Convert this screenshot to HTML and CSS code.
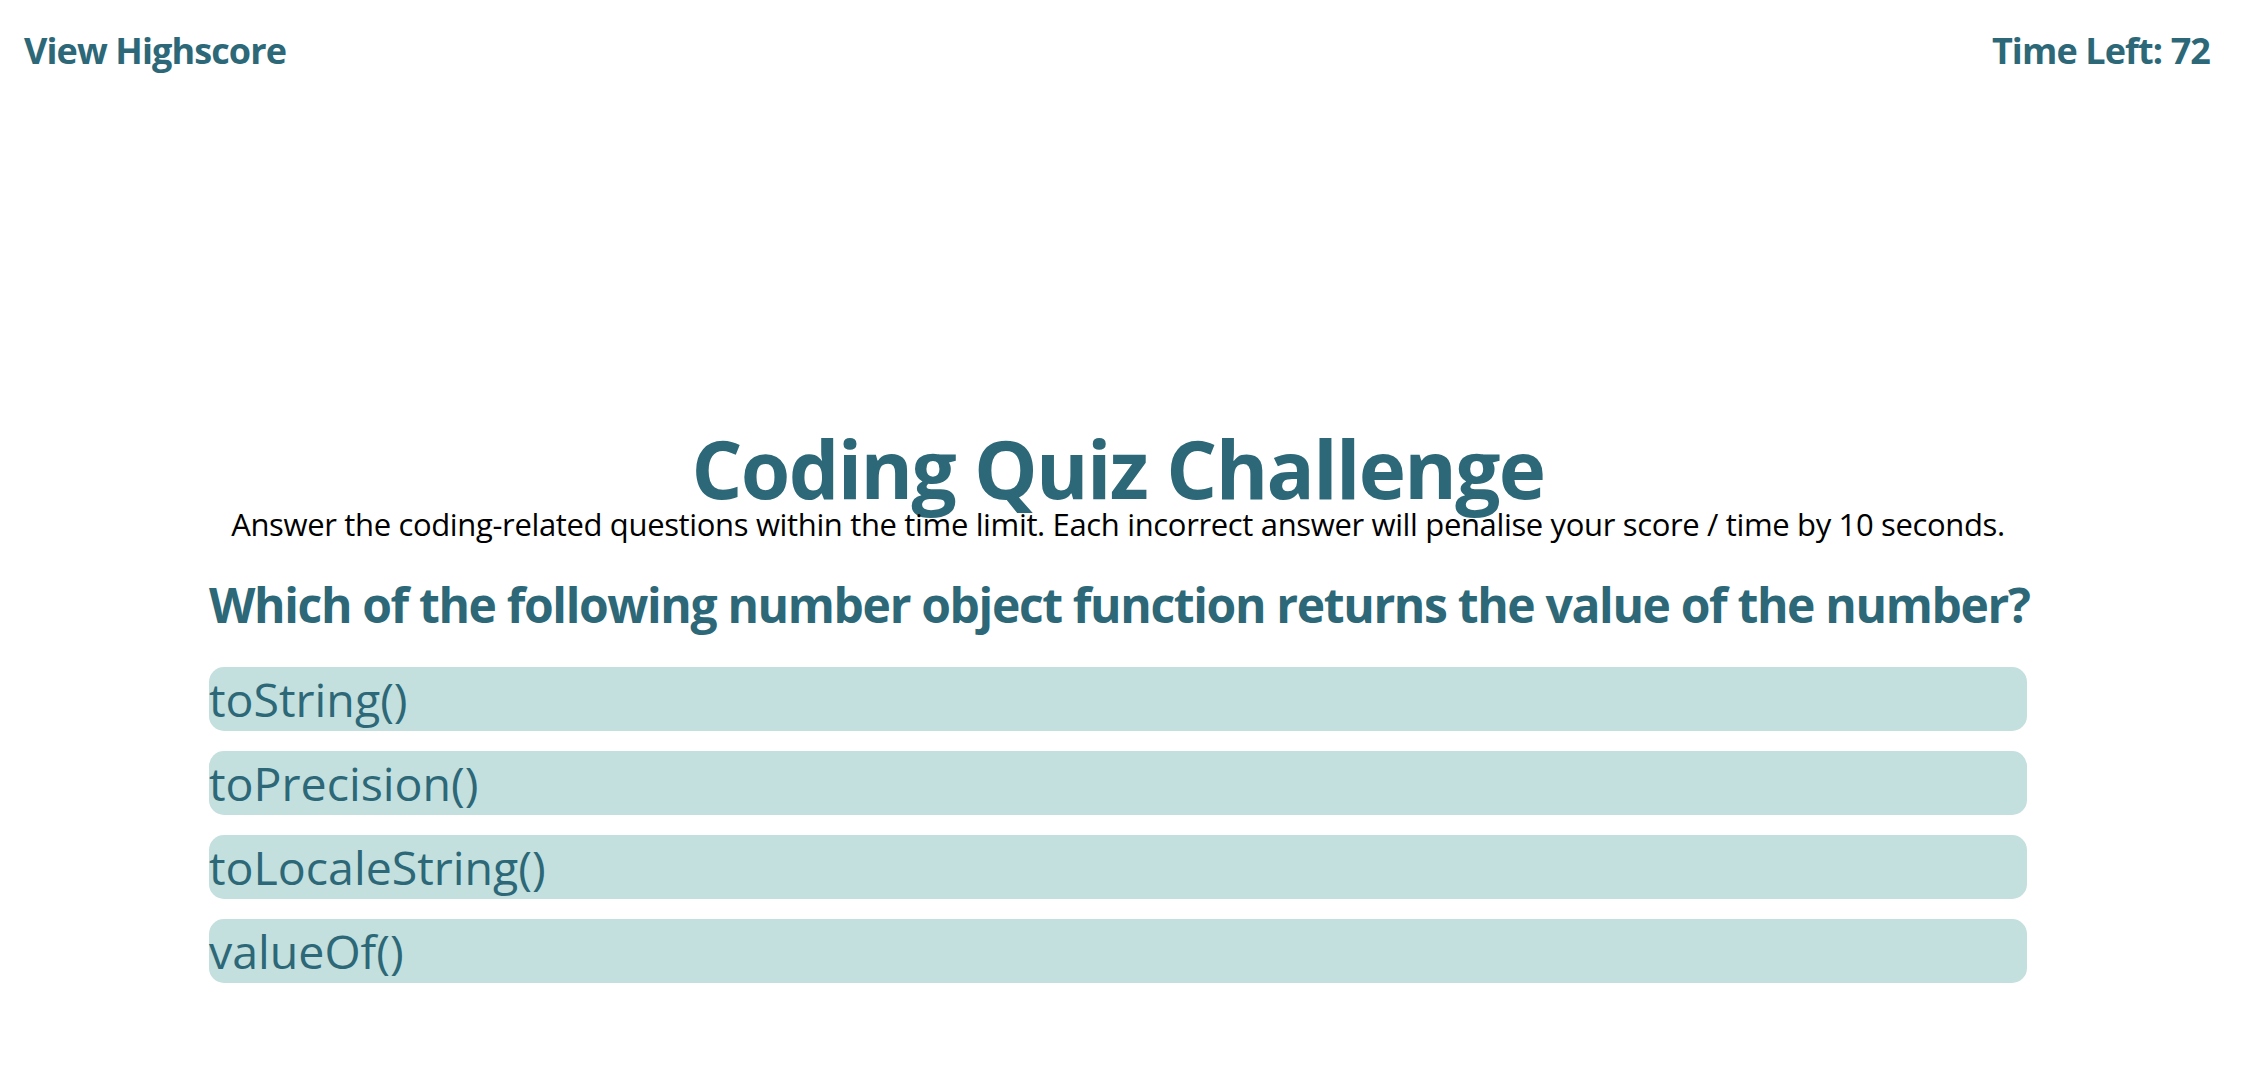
FILE: index.html
```html
<!DOCTYPE html>
<html lang="en">
<head>
<meta charset="utf-8">
<title>Coding Quiz Challenge</title>
<link rel="stylesheet" href="styles.css">
</head>
<body>
<header class="topbar">
  <a class="highscore-link" href="#">View Highscore</a>
  <div class="timer">Time Left: <span class="time-value">72</span></div>
</header>
<main class="quiz">
  <h1 class="quiz-title">Coding Quiz Challenge</h1>
  <p class="quiz-intro">Answer the coding-related questions within the time limit. Each incorrect answer will penalise your score / time by 10 seconds.</p>
  <h2 class="question">Which of the following number object function returns the value of the number?</h2>
  <ul class="answers">
    <li class="answer">toString()</li>
    <li class="answer">toPrecision()</li>
    <li class="answer">toLocaleString()</li>
    <li class="answer">valueOf()</li>
  </ul>
</main>
</body>
</html>
```
FILE: styles.css
```css
html, body {
  margin: 0;
  padding: 0;
  background: #ffffff;
}

body {
  font-family: "Open Sans", "Noto Sans", "Liberation Sans", sans-serif;
  color: #2c6877;
}

.topbar {
  display: flex;
  justify-content: space-between;
  align-items: flex-start;
  padding: 26px 54px 0 24px;
  height: 50px;
}

.highscore-link,
.timer {
  font-size: 36px;
  font-weight: 700;
  line-height: 50px;
  letter-spacing: -0.9px;
  color: #2c6877;
  text-decoration: none;
}

.quiz {
  width: 1818px;
  margin: 356px 0 0 209px;
}

.quiz-title {
  margin: 0;
  text-align: center;
  font-size: 80px;
  font-weight: 700;
  line-height: 72px;
  letter-spacing: -1.65px;
  color: #2c6877;
}

.quiz-intro {
  margin: 0;
  text-align: center;
  font-size: 31px;
  line-height: 40px;
  letter-spacing: -0.35px;
  color: #000000;
  white-space: nowrap;
}

.question {
  margin: 31px 0 32px 0;
  font-size: 48px;
  font-weight: 700;
  line-height: 60px;
  letter-spacing: -1.35px;
  color: #2c6877;
  white-space: nowrap;
}

.answers {
  list-style: none;
  margin: 0;
  padding: 0;
  display: flex;
  flex-direction: column;
  gap: 20px;
}

.answer {
  height: 64px;
  line-height: 64px;
  font-size: 46.5px;
  background: #c3dfde;
  border-radius: 15px;
  color: #2c6877;
  white-space: nowrap;
}
```
